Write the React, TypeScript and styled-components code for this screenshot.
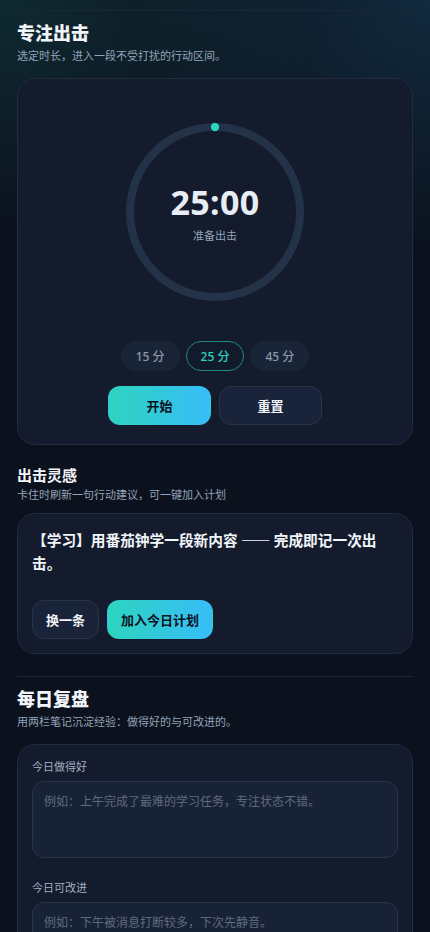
import React, { useState } from 'react'
import styled, { createGlobalStyle, css } from 'styled-components'

const GlobalStyle = createGlobalStyle`
  html, body {
    margin: 0;
    padding: 0;
    background: #0b111d;
  }
  body {
    font-family: "Noto Sans", "Noto Sans CJK SC", sans-serif;
    color: #e2e8f0;
  }
  * { box-sizing: border-box; }
`

const Page = styled.div`
  min-height: 100vh;
  padding: 10px 17px 40px;
  background:
    radial-gradient(320px 240px at 0 0, rgba(45, 212, 191, 0.13), transparent 100%),
    radial-gradient(300px 260px at 100% 0, rgba(56, 189, 248, 0.15), transparent 100%),
    #0b111d;
`

const Section = styled.section<{ gap?: number }>`
  border-top: 1px solid #1c2638;
  padding-top: 9px;
  margin-top: ${p => p.gap ?? 0}px;
`

const Title = styled.h2`
  margin: 0;
  font-size: 18px;
  line-height: 26px;
  font-weight: 900;
  color: #f1f5f9;
`

const SubTitle = styled.h3`
  margin: 20px 0 0;
  font-size: 15px;
  line-height: 20px;
  font-weight: 700;
  color: #f1f5f9;
`

const Hint = styled.p<{ after?: number }>`
  margin: 2px 0 ${p => p.after ?? 14}px;
  font-size: 11px;
  line-height: 16px;
  color: #94a3b8;
`

const Card = styled.div`
  background: #131b2d;
  border: 1px solid #212c40;
  border-radius: 18px;
  padding: 14px;
`

const FocusCard = styled(Card)`
  display: flex;
  flex-direction: column;
  align-items: center;
  padding: 44px 14px 19px;
`

const Dial = styled.div`
  position: relative;
  width: 178px;
  height: 178px;
`

const DialText = styled.div`
  position: absolute;
  inset: 0;
  display: flex;
  flex-direction: column;
  align-items: center;
  justify-content: center;
  padding-top: 2px;
`

const Time = styled.div`
  font-size: 34px;
  line-height: 40px;
  font-weight: 700;
  color: #e8edf5;
  letter-spacing: 0.3px;
`

const DialLabel = styled.div`
  margin-top: 6px;
  font-size: 11px;
  line-height: 16px;
  color: #94a3b8;
`

const Chips = styled.div`
  display: flex;
  gap: 6px;
  margin-top: 40px;
`

const Chip = styled.button<{ active?: boolean }>`
  height: 30px;
  padding: 0 14px;
  min-width: 58px;
  border-radius: 15px;
  font-family: inherit;
  font-size: 12px;
  font-weight: 500;
  border: 1px solid transparent;
  background: #1a2437;
  color: #8b98ac;
  ${p =>
    p.active &&
    css`
      background: #121b2c;
      border-color: #1f8a80;
      color: #2dd4bf;
    `}
`

const Row = styled.div<{ top: number; center?: boolean }>`
  display: flex;
  gap: 8px;
  margin-top: ${p => p.top}px;
  justify-content: ${p => (p.center ? 'center' : 'flex-start')};
`

const Button = styled.button<{ primary?: boolean; wide?: boolean }>`
  height: 39px;
  padding: 0 13px;
  min-width: ${p => (p.wide ? '103px' : '0')};
  border-radius: 12px;
  font-family: inherit;
  font-size: 13px;
  font-weight: 700;
  border: 1px solid #283448;
  background: #19233a;
  color: #f1f5f9;
  ${p =>
    p.primary &&
    css`
      border-color: transparent;
      background: linear-gradient(90deg, #2dd4bf, #38bdf8);
      color: #0b1322;
    `}
`

const Idea = styled.p`
  margin: 0;
  font-family: "Noto Sans CJK SC", "Noto Sans", sans-serif;
  font-size: 14.7px;
  line-height: 23px;
  font-weight: 700;
  color: #f1f5f9;
`

const Dash = styled.span`
  font-feature-settings: "fwid";
`

const Field = styled.div`
  display: flex;
  flex-direction: column;
  & + & {
    margin-top: 22px;
  }
`

const FieldLabel = styled.label`
  font-size: 11px;
  line-height: 16px;
  color: #a3b0c2;
  margin-bottom: 6px;
`

const Note = styled.textarea`
  height: 77px;
  padding: 11px;
  border-radius: 12px;
  border: 1px solid #27344b;
  background: #182237;
  color: #e2e8f0;
  font-family: inherit;
  font-size: 12px;
  line-height: 18px;
  resize: none;
  outline: none;
  &::placeholder {
    color: #5f6b7d;
  }
`

const durations = [15, 25, 45]

export default function App() {
  const [minutes, setMinutes] = useState(25)

  return (
    <Page>
      <GlobalStyle />
      <Section>
        <Title>专注出击</Title>
        <Hint>选定时长，进入一段不受打扰的行动区间。</Hint>
        <FocusCard>
          <Dial>
            <svg width="178" height="178" viewBox="0 0 178 178">
              <circle cx="89" cy="89" r="85" fill="none" stroke="#243247" strokeWidth="8" />
              <circle cx="89" cy="4" r="4.2" fill="#2dd4bf" />
            </svg>
            <DialText>
              <Time>{`${minutes}:00`}</Time>
              <DialLabel>准备出击</DialLabel>
            </DialText>
          </Dial>
          <Chips>
            {durations.map(d => (
              <Chip key={d} active={d === minutes} onClick={() => setMinutes(d)}>
                {d} 分
              </Chip>
            ))}
          </Chips>
          <Row top={15} center>
            <Button primary wide>开始</Button>
            <Button wide>重置</Button>
          </Row>
        </FocusCard>

        <SubTitle>出击灵感</SubTitle>
        <Hint after={10}>卡住时刷新一句行动建议，可一键加入计划</Hint>
        <Card>
          <Idea>
            【学习】用番茄钟学一段新内容 <Dash>——</Dash> 完成即记一次出击。
          </Idea>
          <Row top={26}>
            <Button>换一条</Button>
            <Button primary>加入今日计划</Button>
          </Row>
        </Card>
      </Section>

      <Section gap={22}>
        <Title>每日复盘</Title>
        <Hint>用两栏笔记沉淀经验：做得好的与可改进的。</Hint>
        <Card>
          <Field>
            <FieldLabel>今日做得好</FieldLabel>
            <Note placeholder="例如：上午完成了最难的学习任务，专注状态不错。" />
          </Field>
          <Field>
            <FieldLabel>今日可改进</FieldLabel>
            <Note placeholder="例如：下午被消息打断较多，下次先静音。" />
          </Field>
        </Card>
      </Section>
    </Page>
  )
}
